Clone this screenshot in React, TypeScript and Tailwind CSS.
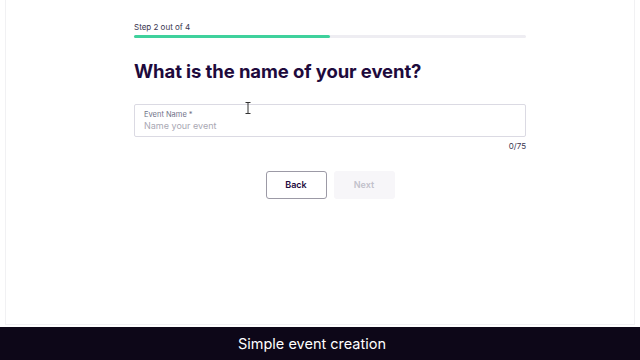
export default function App() {
  return (
    <div className="w-[640px] h-[360px] flex flex-col bg-white overflow-hidden font-['Inter',sans-serif]">
      <div className="flex-1 flex flex-col border-b border-[#f1f1f3] mx-[5px] border-x pl-[128px]">
        <div className="w-[392px] flex flex-col pt-[22px]">
          <p className="text-[8px] leading-[10px] text-[#39364f]">Step 2 out of 4</p>
          <div className="mt-[3px] h-[3px] w-full bg-[#eeedf2] rounded-full">
            <div className="h-full w-1/2 bg-[#3fd19c] rounded-full" />
          </div>
          <h1 className="mt-[21px] text-[18.5px] leading-[24px] font-bold text-[#1e0a3c] tracking-[-0.1px]">
            What is the name of your event?
          </h1>
          <div className="relative mt-[21px] h-[33px] border border-[#dbdae3] rounded-[2px] px-[9px] pt-[5px]">
            <p className="text-[7.5px] leading-[10px] text-[#6f7287]">Event Name *</p>
            <p className="text-[9px] leading-[12px] text-[#a9a8b3]">Name your event</p>
            <svg className="absolute left-[110px] top-[-3px]" width="6" height="12" viewBox="0 0 6 12">
              <path d="M0.5 0.5h5M3 0.5v11M0.5 11.5h5" stroke="#333" strokeWidth="1" fill="none" />
            </svg>
          </div>
          <p className="mt-[4px] text-right text-[8px] leading-[10px] text-[#39364f]">0/75</p>
          <div className="mt-[20px] flex justify-center gap-[7px]">
            <button className="w-[61px] h-[28px] border border-[#9c9aa6] rounded-[3px] text-[9px] font-semibold text-[#1e0a3c]">
              Back
            </button>
            <button className="w-[61px] h-[28px] bg-[#f7f6f9] rounded-[3px] text-[9px] font-semibold text-[#c2c1cb]">
              Next
            </button>
          </div>
        </div>
      </div>
      <div className="h-[33px] mt-[2px] bg-[#0d0718] flex items-center justify-center pr-[16px]">
        <span className="text-[14.5px] text-white">Simple event creation</span>
      </div>
    </div>
  );
}
